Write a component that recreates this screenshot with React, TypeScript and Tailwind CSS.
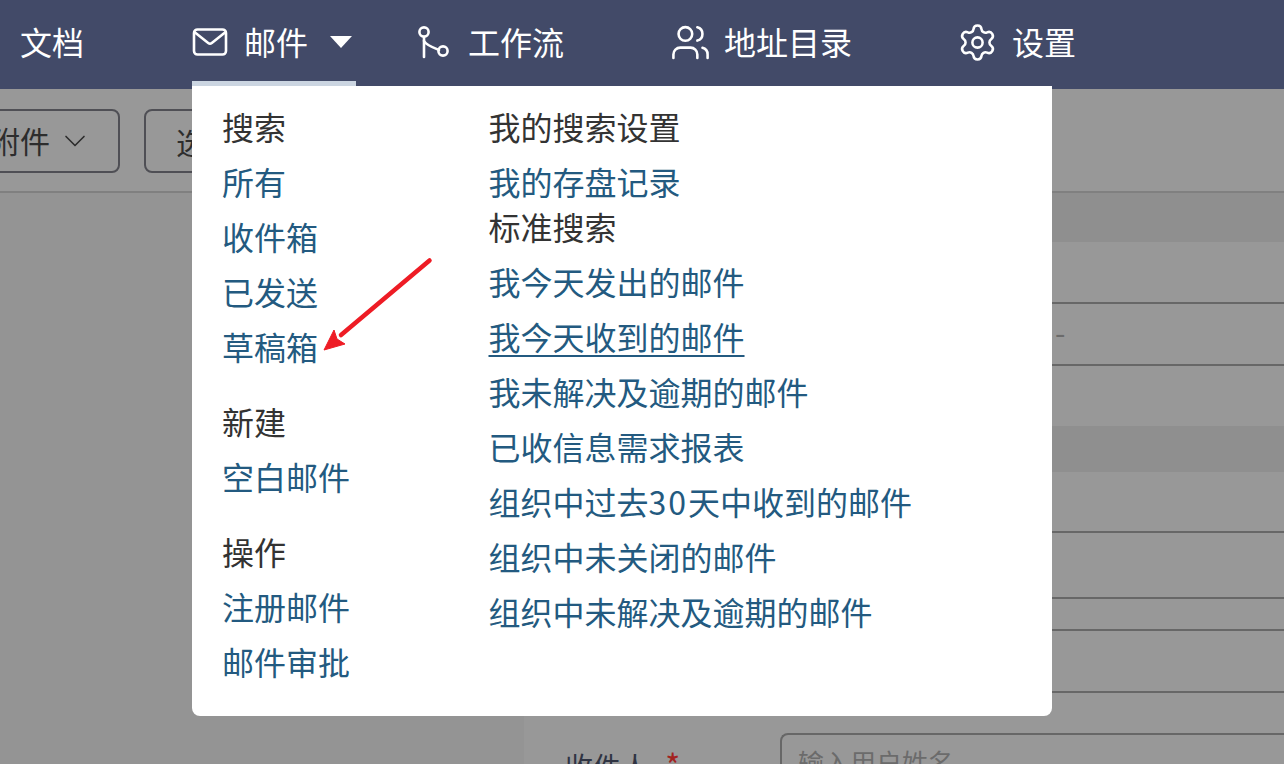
import React from 'react';
import { ChevronDown, Settings, Users } from 'lucide-react';

const font = { fontFamily: '"Noto Sans CJK SC", "Noto Sans", sans-serif' };

const MailIcon = () => (
  <svg width="36" height="30" viewBox="0 0 36 30" fill="none" stroke="white" strokeWidth="2.6" strokeLinecap="round" strokeLinejoin="round">
    <rect x="2" y="2.5" width="32" height="25" rx="3.5" />
    <path d="M3 5.5 16.2 16a3 3 0 0 0 3.6 0L33 5.5" />
  </svg>
);

const WorkflowIcon = () => (
  <svg width="32" height="36" viewBox="0 0 32 36" fill="none" stroke="white" strokeWidth="2.6" strokeLinecap="round">
    <circle cx="7" cy="8" r="4.6" />
    <path d="M7 13v20" />
    <path d="M7 17c2 4 10 7 15 9" />
    <circle cx="26" cy="27" r="4.6" />
  </svg>
);

const SectionTitle = ({ children, className = '' }: { children: React.ReactNode; className?: string }) => (
  <div className={`h-[55px] flex items-center text-[#333333] ${className}`}>{children}</div>
);

const MenuLink = ({ children, underline }: { children: React.ReactNode; underline?: boolean }) => (
  <div className="h-[55px] flex items-center text-[#235a80]">
    <span className={underline ? 'underline underline-offset-[5px] decoration-2' : ''}>{children}</span>
  </div>
);

const Row = ({ children, className = '' }: { children?: React.ReactNode; className?: string }) => (
  <div className={`border-b-2 border-[#676767] ${className}`}>{children}</div>
);

export default function App() {
  return (
    <div className="relative w-[1284px] h-[764px] overflow-hidden bg-[#989898] text-[32px] leading-none" style={font}>
      {/* top nav */}
      <div className="h-[89px] bg-[#424a68] flex text-white whitespace-nowrap">
        <div className="ml-5 w-[64px] h-[84px] flex items-center">
          <span className="-translate-y-px">文档</span>
        </div>
        <div className="ml-[108px] w-[164px] h-[86px] pt-[3px] flex items-center border-b-[5px] border-[#cbd5e1]">
          <MailIcon />
          <span className="ml-4 -translate-y-px">邮件</span>
          <span className="ml-[22px] w-0 h-0 border-x-[11.5px] border-x-transparent border-t-[12px] border-t-white"></span>
        </div>
        <div className="ml-[61px] h-[84px] flex items-center">
          <WorkflowIcon />
          <span className="ml-[19px] -translate-y-px">工作流</span>
        </div>
        <div className="ml-[109px] h-[84px] flex items-center">
          <Users size={41} strokeWidth={1.5} className="-ml-[3px]" />
          <span className="ml-[13px] -translate-y-px">地址目录</span>
        </div>
        <div className="ml-[108px] h-[84px] flex items-center">
          <Settings size={41} strokeWidth={1.5} className="-ml-[3px]" />
          <span className="ml-[14px] -translate-y-px">设置</span>
        </div>
      </div>

      {/* toolbar behind the overlay */}
      <div className="h-[104px] bg-[#989898] border-b-2 border-[#808080] flex items-start pt-5 text-[30px] text-[#2d2d2d]">
        <div className="-ml-[40px] w-[160px] h-[64px] border-2 border-[#4f4f55] rounded-lg flex items-center justify-end pr-[25px] gap-[7px]">
          <span className="-translate-y-px">附件</span>
          <ChevronDown size={36} strokeWidth={1.1} />
        </div>
        <div className="ml-6 w-[150px] h-[64px] border-2 border-[#4f4f55] rounded-lg flex items-center pl-[30px]">选择</div>
      </div>

      {/* page body */}
      <div className="flex">
        <div className="w-[524px] h-[571px] bg-[#949494]"></div>
        <div className="flex-1 flex flex-col">
          <div className="h-[49px] bg-[#8f8f8f]"></div>
          <Row className="h-[62px]" />
          <Row className="h-[62px] flex items-center pl-[531px] text-[#6b6b6b] text-[30px]">
            <span className="-translate-y-[3px]">-</span>
          </Row>
          <div className="h-[60px]"></div>
          <div className="h-[46px] bg-[#8f8f8f]"></div>
          <Row className="h-[61px]" />
          <Row className="h-[66px]" />
          <Row className="h-[32px]" />
          <Row className="h-[62px]" />
          <div className="mt-[40px] flex items-start">
            <div className="w-[256px] pl-[41px] pt-[15px] text-[28px] text-[#2f3443] whitespace-nowrap">
              收件人 <span className="ml-[10px] text-[32px] text-[#a3231f]">*</span>
            </div>
            <div className="flex-1 h-[60px] border-2 border-b-0 border-r-0 border-[#676767] rounded-tl-lg pl-4 pt-[14px] text-[26px] text-[#6b6b6b] whitespace-nowrap">
              输入用户姓名
            </div>
          </div>
        </div>
      </div>

      {/* mail dropdown */}
      <div className="absolute left-[192px] top-[86px] w-[860px] h-[630px] bg-white rounded-b-lg pt-3 flex">
        <div className="pl-[30px] w-[296.5px]">
          <SectionTitle>搜索</SectionTitle>
          <MenuLink>所有</MenuLink>
          <MenuLink>收件箱</MenuLink>
          <MenuLink>已发送</MenuLink>
          <MenuLink>草稿箱</MenuLink>
          <SectionTitle className="mt-5">新建</SectionTitle>
          <MenuLink>空白邮件</MenuLink>
          <SectionTitle className="mt-5">操作</SectionTitle>
          <MenuLink>注册邮件</MenuLink>
          <MenuLink>邮件审批</MenuLink>
        </div>
        <div>
          <SectionTitle>我的搜索设置</SectionTitle>
          <MenuLink>我的存盘记录</MenuLink>
          <SectionTitle className="-mt-[10px]">标准搜索</SectionTitle>
          <MenuLink>我今天发出的邮件</MenuLink>
          <MenuLink underline>我今天收到的邮件</MenuLink>
          <MenuLink>我未解决及逾期的邮件</MenuLink>
          <MenuLink>已收信息需求报表</MenuLink>
          <MenuLink>组织中过去<span className="tracking-[2px]">30</span>天中收到的邮件</MenuLink>
          <MenuLink>组织中未关闭的邮件</MenuLink>
          <MenuLink>组织中未解决及逾期的邮件</MenuLink>
        </div>
      </div>

      {/* annotation arrow */}
      <svg className="absolute left-[320px] top-[255px]" width="115" height="100" viewBox="0 0 115 100" fill="none">
        <path d="M109.5 5.5 21 80" stroke="#ee1c25" strokeWidth="4.5" strokeLinecap="round" />
        <path d="M4 95 14 75 17 84 25 89Z" fill="#ee1c25" stroke="#ee1c25" strokeWidth="1" />
      </svg>
    </div>
  );
}
